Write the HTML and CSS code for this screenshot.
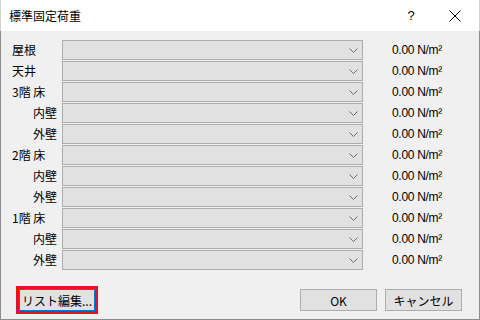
FILE: index.html
```html
<!DOCTYPE html>
<html lang="ja">
<head>
    <meta charset="UTF-8">
    <title>標準固定荷重</title>
    <link rel="stylesheet" href="styles.css">
</head>
<body>
    <div class="dialog">
        <header class="titlebar">
            <span class="title">標準固定荷重</span>
            <span class="help">?</span>
            <span class="close">
                <svg width="12" height="12" viewBox="0 0 12 12"><path d="M0.5 0.5 L11.5 11.5 M11.5 0.5 L0.5 11.5" stroke="#000" stroke-width="1"/></svg>
            </span>
        </header>

        <main class="content">
            <div class="rows">
                <span class="label">屋根</span>
                <div class="combo"><svg width="9" height="5" viewBox="0 0 9 5"><path d="M0.5 0.5 L4.5 4.5 L8.5 0.5" stroke="#6a6a6a" fill="none"/></svg></div>
                <span class="value">0.00 N/m²</span>

                <span class="label">天井</span>
                <div class="combo"><svg width="9" height="5" viewBox="0 0 9 5"><path d="M0.5 0.5 L4.5 4.5 L8.5 0.5" stroke="#6a6a6a" fill="none"/></svg></div>
                <span class="value">0.00 N/m²</span>

                <span class="label">3階 床</span>
                <div class="combo"><svg width="9" height="5" viewBox="0 0 9 5"><path d="M0.5 0.5 L4.5 4.5 L8.5 0.5" stroke="#6a6a6a" fill="none"/></svg></div>
                <span class="value">0.00 N/m²</span>

                <span class="label sub">内壁</span>
                <div class="combo"><svg width="9" height="5" viewBox="0 0 9 5"><path d="M0.5 0.5 L4.5 4.5 L8.5 0.5" stroke="#6a6a6a" fill="none"/></svg></div>
                <span class="value">0.00 N/m²</span>

                <span class="label sub">外壁</span>
                <div class="combo"><svg width="9" height="5" viewBox="0 0 9 5"><path d="M0.5 0.5 L4.5 4.5 L8.5 0.5" stroke="#6a6a6a" fill="none"/></svg></div>
                <span class="value">0.00 N/m²</span>

                <span class="label">2階 床</span>
                <div class="combo"><svg width="9" height="5" viewBox="0 0 9 5"><path d="M0.5 0.5 L4.5 4.5 L8.5 0.5" stroke="#6a6a6a" fill="none"/></svg></div>
                <span class="value">0.00 N/m²</span>

                <span class="label sub">内壁</span>
                <div class="combo"><svg width="9" height="5" viewBox="0 0 9 5"><path d="M0.5 0.5 L4.5 4.5 L8.5 0.5" stroke="#6a6a6a" fill="none"/></svg></div>
                <span class="value">0.00 N/m²</span>

                <span class="label sub">外壁</span>
                <div class="combo"><svg width="9" height="5" viewBox="0 0 9 5"><path d="M0.5 0.5 L4.5 4.5 L8.5 0.5" stroke="#6a6a6a" fill="none"/></svg></div>
                <span class="value">0.00 N/m²</span>

                <span class="label">1階 床</span>
                <div class="combo"><svg width="9" height="5" viewBox="0 0 9 5"><path d="M0.5 0.5 L4.5 4.5 L8.5 0.5" stroke="#6a6a6a" fill="none"/></svg></div>
                <span class="value">0.00 N/m²</span>

                <span class="label sub">内壁</span>
                <div class="combo"><svg width="9" height="5" viewBox="0 0 9 5"><path d="M0.5 0.5 L4.5 4.5 L8.5 0.5" stroke="#6a6a6a" fill="none"/></svg></div>
                <span class="value">0.00 N/m²</span>

                <span class="label sub">外壁</span>
                <div class="combo"><svg width="9" height="5" viewBox="0 0 9 5"><path d="M0.5 0.5 L4.5 4.5 L8.5 0.5" stroke="#6a6a6a" fill="none"/></svg></div>
                <span class="value">0.00 N/m²</span>
            </div>

            <div class="footer">
                <div class="highlight">
                    <button class="btn focused">リスト編集...</button>
                </div>
                <div class="spacer"></div>
                <button class="btn">OK</button>
                <button class="btn">キャンセル</button>
            </div>
        </main>
    </div>
</body>
</html>
```

FILE: styles.css
```css
body, html {
    margin: 0;
    padding: 0;
    font-family: "Noto Sans CJK JP", "Liberation Sans", sans-serif;
    font-size: 12px;
    color: #000000;
}

.dialog {
    width: 480px;
    height: 320px;
    display: flex;
    flex-direction: column;
    background-color: #f0f0f0;
}

.titlebar {
    height: 31px;
    background-color: #ffffff;
    display: flex;
    align-items: center;
    border-left: 1px solid #d0d0d0;
    border-right: 1px solid #d0d0d0;
    padding-right: 2px;
    box-sizing: border-box;
}

.title {
    flex: 1;
    padding-left: 8px;
    font-size: 12px;
    line-height: 16px;
}

.help {
    width: 44px;
    text-align: center;
    font-family: "Liberation Sans", sans-serif;
    font-size: 13px;
}

.close {
    width: 44px;
    display: flex;
    justify-content: center;
}

.content {
    flex: 1;
    border: 1px solid #8c8c8c;
    border-top: none;
    padding: 9px 0 0 11px;
    display: flex;
    flex-direction: column;
}

.rows {
    display: grid;
    grid-template-columns: 50px 301px auto;
    grid-auto-rows: 20px;
    row-gap: 1px;
    align-items: center;
}

.label {
    line-height: 20px;
}

.label.sub {
    padding-left: 21px;
}

.combo {
    height: 20px;
    box-sizing: border-box;
    background-color: #e1e1e1;
    border: 1px solid #adadad;
    display: flex;
    align-items: center;
    justify-content: flex-end;
    padding-right: 4px;
}

.value {
    padding-left: 29px;
    font-family: "Liberation Sans Narrow", "Liberation Sans", sans-serif;
    font-size: 12px;
    letter-spacing: -0.3px;
}

.footer {
    display: flex;
    align-items: center;
    margin-top: 16px;
    padding-right: 17px;
    gap: 8px;
}

.spacer {
    flex: 1;
}

.highlight {
    border: 3px solid #e81123;
    margin-left: 4px;
    display: flex;
}

.btn {
    width: 77px;
    height: 22px;
    box-sizing: border-box;
    background-color: #e1e1e1;
    border: 1px solid #adadad;
    font-family: "Noto Sans CJK JP", sans-serif;
    font-size: 12px;
    padding: 0;
    color: #000000;
}

.btn.focused {
    width: 76px;
    border-color: #0078d7;
}
```
